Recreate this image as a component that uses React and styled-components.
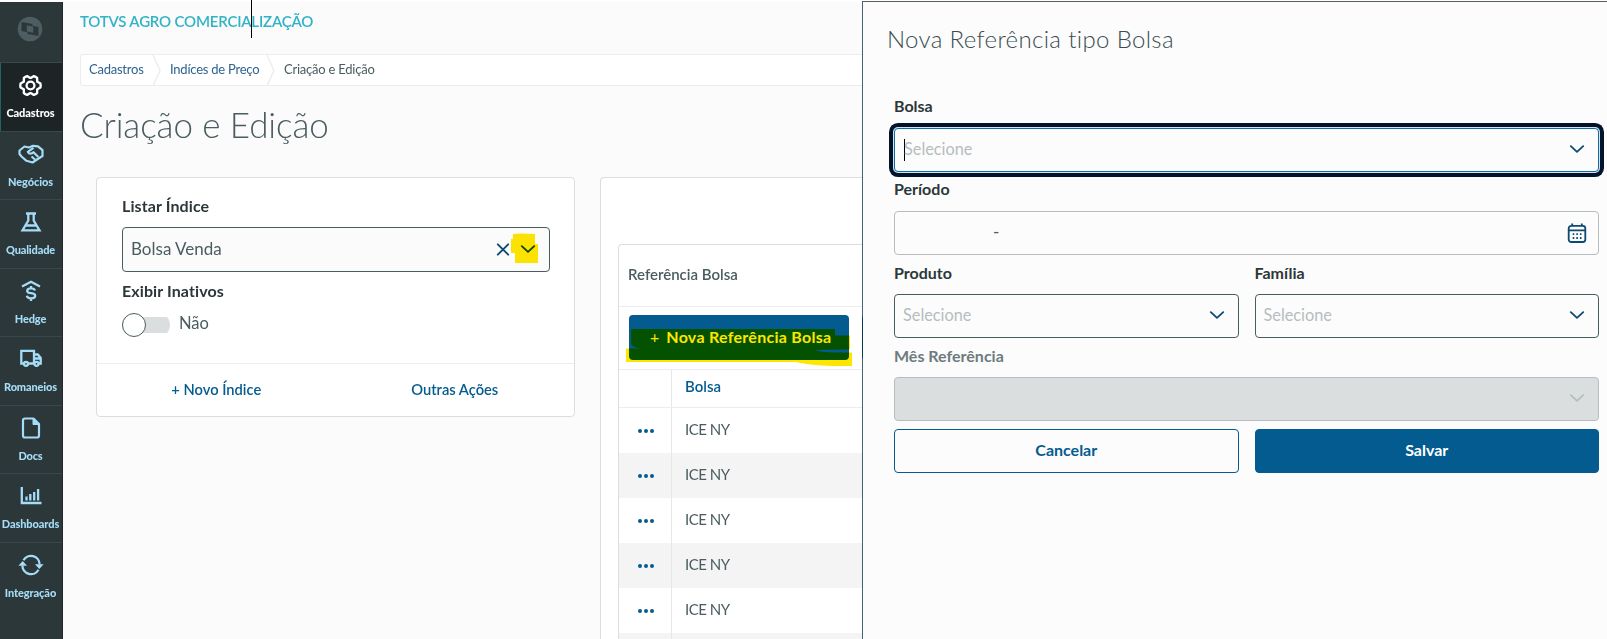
import React from 'react';
import styled, {createGlobalStyle} from "styled-components";
import {PiGearSixBold} from "react-icons/pi";

const primary = "#045b8f";
const textDark = "#2c3739";
const textMid = "#4a5c60";

const menuItems = [
    {label: "Cadastros", icon: <PiGearSixBold size={25}/>, active: true, track: -0.1},
    {label: "Negócios", icon: <HandshakeIcon/>, track: -0.1},
    {label: "Qualidade", icon: <FlaskIcon/>, track: -0.15},
    {label: "Hedge", icon: <HedgeIcon/>, track: -0.15},
    {label: "Romaneios", icon: <TruckIcon/>, track: -0.15},
    {label: "Docs", icon: <FileIcon/>, track: -0.2},
    {label: "Dashboards", icon: <ChartIcon/>, track: -0.1},
    {label: "Integração", icon: <SyncIcon/>, track: -0.1},
];

const rows = ["ICE NY", "ICE NY", "ICE NY", "ICE NY", "ICE NY"];

function LogoIcon() {
    return (
        <svg width="26" height="26" viewBox="0 0 26 26">
            <circle cx="13" cy="13" r="12.3" fill="#4d5d62"/>
            <path d="M4.5 6L15.5 8V9.8L21.5 11V20L10.5 18V16.2L4.5 15Z" fill="#2c3739"/>
            <path d="M9.8 9.3L16.2 10.4V16.7L9.8 15.6Z" fill="#4d5d62"/>
        </svg>
    );
}

function HandshakeIcon() {
    return (
        <svg width="26" height="24" viewBox="0 0 26 24" fill="none" stroke="currentColor" strokeWidth="2.2"
             strokeLinejoin="round">
            <path d="M1.5 8.5L6.5 4.5L11 5.5L15 3.8L20 4.3L24.5 8.2V14L20.5 16.5L14.5 20.5L8.5 18.8L3.5 14.5L1.5 12Z"/>
            <path d="M15.5 5.8L9.8 9.8C10.5 12.3 13.8 12 15.5 10.2L20.3 15M13.5 14.5L17 17.5"/>
        </svg>
    );
}

function FlaskIcon() {
    return (
        <svg width="24" height="24" viewBox="0 0 24 24" fill="none" stroke="currentColor" strokeWidth="2.3">
            <path d="M7 3.5H17M9.3 4V10.5L3.5 20.3H20.5L14.7 10.5V4M6.5 15.5H17.5"/>
        </svg>
    );
}

function HedgeIcon() {
    return (
        <svg width="24" height="24" viewBox="0 0 24 24" fill="none" stroke="currentColor" strokeWidth="2.3">
            <path d="M3 7.5L12 2.8L21 7.5"/>
            <path d="M16 11.5C15.5 9.8 13.8 9.3 12 9.3C9.8 9.3 8.2 10.2 8.2 11.9C8.2 15.4 16.2 13 16.2 16.7C16.2 18.4 14.3 19.3 12 19.3C9.6 19.3 8.2 18.4 7.8 16.7M12 7V9.5M12 19V22"/>
        </svg>
    );
}

function TruckIcon() {
    return (
        <svg width="24" height="24" viewBox="0 0 24 24" fill="none" stroke="currentColor" strokeWidth="2.3">
            <path d="M4.5 16.5H2.3V3.8H15V16.5H9.5M15 7.5H18.8L21.7 11V16.5H20M15 11.5H21"/>
            <circle cx="7" cy="16.8" r="2"/>
            <circle cx="17.5" cy="16.8" r="2"/>
        </svg>
    );
}

function FileIcon() {
    return (
        <svg width="24" height="24" viewBox="0 0 24 24" fill="none" stroke="currentColor" strokeWidth="2.2"
             strokeLinejoin="round">
            <path d="M6 2.5H14.5L20 8V19.5Q20 21.5 18 21.5H6Q4 21.5 4 19.5V4.5Q4 2.5 6 2.5Z"/>
            <path d="M14 3V8.5H19.5Z" fill="currentColor" strokeWidth="1"/>
        </svg>
    );
}

function ChartIcon() {
    return (
        <svg width="24" height="24" viewBox="0 0 24 24" fill="none" stroke="currentColor" strokeWidth="2.3">
            <path d="M2.8 3V19H22.5M7.5 16.5V12.5M11.3 16.5V10M15.2 16.5V8M19.1 16.5V5"/>
        </svg>
    );
}

function SyncIcon() {
    return (
        <svg width="26" height="24" viewBox="0 0 26 24" fill="none" stroke="currentColor" strokeWidth="2.3">
            <path d="M5.5 7.3A8.6 8.6 0 0 1 21.6 11.5M20.5 16.7A8.6 8.6 0 0 1 4.4 12.5"/>
            <path d="M17 11.3H25.6L21.3 16ZM0.4 12.7H9L4.7 8Z" fill="currentColor" stroke="none"/>
        </svg>
    );
}

function ChevronIcon({color = "#0c4a73"}) {
    return (
        <svg width="16" height="10" viewBox="0 0 16 10" fill="none" stroke={color} strokeWidth="1.8"
             strokeLinecap="round" strokeLinejoin="round">
            <path d="M1.8 1.2L8 6.9L14.2 1.2"/>
        </svg>
    );
}

function CloseIcon() {
    return (
        <svg width="14" height="14" viewBox="0 0 14 14" stroke="#0c4a73" strokeWidth="1.9" strokeLinecap="round">
            <path d="M1.8 1.3L12.2 11.7M12.2 1.3L1.8 11.7"/>
        </svg>
    );
}

function CalendarIcon() {
    return (
        <svg width="20" height="20" viewBox="0 0 20 20" fill="none" stroke="#0c4a73" strokeWidth="1.8">
            <rect x="1.7" y="2.8" width="16.6" height="16.2" rx="2.5"/>
            <path d="M2 7.3H18M5.2 0.5V3M14.8 0.5V3"/>
            <path d="M5.7 11.2H7.3M9.3 11.2H10.9M12.9 11.2H14.5M5.7 15H7.3M9.3 15H10.9M12.9 15H14.5"/>
        </svg>
    );
}

function Separator() {
    return (
        <svg width="9" height="31" viewBox="0 0 9 31" fill="none" stroke="#eceeee" strokeWidth="1.5">
            <path d="M1 0L8 15.5L1 31"/>
        </svg>
    );
}

const App = () => (
    <Screen>
        <GlobalStyle/>
        <Sidebar>
            <LogoBox><LogoIcon/></LogoBox>
            {menuItems.map((item) => (
                <MenuItem key={item.label} $active={item.active}>
                    <MenuIcon>{item.icon}</MenuIcon>
                    <MenuLabel $track={item.track}>{item.label}</MenuLabel>
                </MenuItem>
            ))}
        </Sidebar>
        <Main>
            <Product>TOTVS AGRO COMERCIALIZAÇÃO<Caret/></Product>
            <Breadcrumb>
                <Crumb $link $width={63}>Cadastros</Crumb>
                <Separator/>
                <Crumb $link $width={105}>Indíces de Preço</Crumb>
                <Separator/>
                <Crumb $width={110}>Criação e Edição</Crumb>
            </Breadcrumb>
            <PageTitle>Criação e Edição</PageTitle>
            <Columns>
                <FilterCard>
                    <FilterBody>
                        <Label>Listar Índice</Label>
                        <Field>
                            <Value>Bolsa Venda</Value>
                            <CloseIcon/>
                            <Marked>
                                <ChevronIcon/>
                                <ChevronMarker viewBox="0 0 28 31">
                                    <path d="M3 1L12 .5L25 1V11H28V30H5V20H1V6H3Z" fill="#ffe600"/>
                                </ChevronMarker>
                            </Marked>
                        </Field>
                        <Label $top={9}>Exibir Inativos</Label>
                        <SwitchRow>
                            <Switch><Knob/></Switch>
                            <span>Não</span>
                        </SwitchRow>
                    </FilterBody>
                    <FilterFooter>
                        <Action>+ Novo Índice</Action>
                        <Action>Outras Ações</Action>
                    </FilterFooter>
                </FilterCard>
                <TableCard>
                    <Table>
                        <TableTitle>Referência Bolsa</TableTitle>
                        <Toolbar>
                            <NewButton>
                                <span>+</span>
                                <b>Nova Referência Bolsa</b>
                                <ButtonMarker viewBox="0 0 228 40">
                                    <path
                                        d="M6 2H210V8.5H225V22.5L189 23Q197 25.5 213 25.5H227V39H207Q187 38.5 170 35H1V21.5H16Q7 20 6 17Z"
                                        fill="#ffe600"/>
                                </ButtonMarker>
                            </NewButton>
                            <NewButton/>
                        </Toolbar>
                        <HeadRow>
                            <MenuCell/>
                            <HeadCell>Bolsa</HeadCell>
                        </HeadRow>
                        {rows.map((name, index) => (
                            <Row key={index} $odd={index % 2 === 1}>
                                <MenuCell><Dot/><Dot/><Dot/></MenuCell>
                                <Cell>{name}</Cell>
                            </Row>
                        ))}
                        <Row $odd>
                            <MenuCell/>
                        </Row>
                    </Table>
                </TableCard>
            </Columns>
        </Main>
        <Panel>
            <PanelTitle>Nova Referência tipo Bolsa</PanelTitle>
            <Form>
                <Wide>
                    <PanelLabel>Bolsa</PanelLabel>
                    <FocusField>
                        <InputCaret/>
                        <Placeholder>Selecione</Placeholder>
                        <ChevronIcon/>
                    </FocusField>
                </Wide>
                <Wide>
                    <PanelLabel>Período</PanelLabel>
                    <DateField $border="#b6bdbf">
                        <Dash>-</Dash>
                        <CalendarIcon/>
                    </DateField>
                </Wide>
                <div>
                    <PanelLabel $top={1}>Produto</PanelLabel>
                    <PanelField>
                        <Placeholder>Selecione</Placeholder>
                        <ChevronIcon/>
                    </PanelField>
                </div>
                <div>
                    <PanelLabel $top={1}>Família</PanelLabel>
                    <PanelField>
                        <Placeholder>Selecione</Placeholder>
                        <ChevronIcon/>
                    </PanelField>
                </div>
                <Wide>
                    <PanelLabel $muted $top={1}>Mês Referência</PanelLabel>
                    <PanelField $border="#b6bdbf" $disabled>
                        <Placeholder/>
                        <ChevronIcon color="#b6bdbf"/>
                    </PanelField>
                </Wide>
                <Button>Cancelar</Button>
                <Button $primary>Salvar</Button>
            </Form>
        </Panel>
    </Screen>
);

const GlobalStyle = createGlobalStyle`
  * {
    box-sizing: border-box;
  }
  body {
    margin: 0;
    overflow: hidden;
    background: #ffffff;
    font-family: Lato, "Open Sans", sans-serif;
  }
  svg {
    flex: none;
    display: block;
  }
`;

const Screen = styled.div`
  display: flex;
  width: 1607px;
  height: 639px;
  overflow: hidden;
`;

const Sidebar = styled.nav`
  width: 63px;
  flex: none;
  margin-top: 2px;
  background: #2c3739;
  border-right: 1px solid #1f292b;
`;
const LogoBox = styled.div`
  height: 60px;
  padding: 14px 0 0 17px;
`;
const MenuItem = styled.div`
  height: 68.5px;
  display: flex;
  flex-direction: column;
  align-items: center;
  padding: 9px 1px 0 0;
  border-top: 1px solid #3b484b;
  box-shadow: ${props => props.$active ? "inset 1px 0 #1d6468" : "none"};
  background: ${props => props.$active ? "#1d2426" : "transparent"};
  color: ${props => props.$active ? "#ffffff" : "#a5dcf7"};
`;
const MenuIcon = styled.div`
  height: 26px;
  display: flex;
  align-items: center;
`;
const MenuLabel = styled.div`
  margin-top: 8px;
  font-size: 11px;
  line-height: 14px;
  font-weight: 900;
  white-space: nowrap;
  letter-spacing: ${props => props.$track}px;
`;

const Main = styled.main`
  width: 800px;
  flex: none;
  margin-top: 2px;
  height: 637px;
  padding-left: 17px;
  background: #fbfbfb;
`;
const Product = styled.div`
  position: relative;
  height: 52px;
  padding-top: 9px;
  font-size: 15px;
  line-height: 20px;
  font-weight: 600;
  letter-spacing: -0.2px;
  color: #2fb3c6;
`;
const Caret = styled.i`
  position: absolute;
  left: 171px;
  top: -2px;
  width: 1px;
  height: 38px;
  background: #000000;
`;
const Breadcrumb = styled.div`
  display: flex;
  align-items: center;
  height: 32px;
  border: 1px solid #eceeee;
  border-right: none;
  border-radius: 3px 0 0 3px;
  background: #ffffff;
  padding-left: 8px;
`;
const Crumb = styled.span`
  width: ${props => props.$width}px;
  font-size: 13px;
  line-height: 16px;
  padding-bottom: 2px;
  white-space: nowrap;
  letter-spacing: -0.23px;
  color: ${props => props.$link ? "#2f6390" : textMid};
  ${Breadcrumb} svg + & {
    padding-left: 9px;
  }
`;
const PageTitle = styled.h1`
  margin: 15px 0 0;
  height: 76px;
  font-size: 35px;
  line-height: 46px;
  font-weight: 300;
  letter-spacing: -0.1px;
  color: ${textMid};
`;
const Columns = styled.div`
  display: flex;
  align-items: flex-start;
  gap: 25px;
  padding-left: 16px;
`;
const FilterCard = styled.section`
  width: 479px;
  height: 240px;
  flex: none;
  border: 1px solid #dadedf;
  border-radius: 4px;
  background: #ffffff;
`;
const FilterBody = styled.div`
  height: 186px;
  padding: 18px 24px 0 25px;
  border-bottom: 1px solid #eceeee;
`;
const Label = styled.div`
  margin-top: ${props => props.$top || 0}px;
  padding-bottom: 11px;
  font-size: 16px;
  line-height: 20px;
  font-weight: 700;
  letter-spacing: 0.1px;
  color: ${textDark};
`;
const Field = styled.div`
  display: flex;
  align-items: center;
  height: 45px;
  padding: 0 13px 0 8px;
  border: 1px solid ${textMid};
  border-radius: 4px;
  background: #fbfbfb;
`;
const Value = styled.span`
  flex: 1;
  padding-bottom: 2px;
  font-size: 17px;
  line-height: 22px;
  color: ${textMid};
`;
const Marked = styled.span`
  position: relative;
  margin-left: 10px;
`;
const ChevronMarker = styled.svg`
  position: absolute;
  left: -10px;
  top: -12px;
  width: 28px;
  height: 31px;
  mix-blend-mode: multiply;
`;
const SwitchRow = styled.div`
  display: flex;
  align-items: center;
  gap: 9px;
  font-size: 16.5px;
  line-height: 22px;
  color: ${textMid};
  span {
    padding-bottom: 3px;
  }
`;
const Switch = styled.div`
  width: 48px;
  height: 24px;
  border-radius: 12px;
  background: linear-gradient(#dadedf, #dadedf) center / 100% 16px no-repeat;
`;
const Knob = styled.div`
  width: 24px;
  height: 24px;
  border: 1px solid ${textMid};
  border-radius: 50%;
  background: #ffffff;
`;
const FilterFooter = styled.div`
  display: flex;
`;
const Action = styled.div`
  flex: 1;
  padding-top: 15px;
  text-align: center;
  font-size: 14.7px;
  line-height: 20px;
  font-weight: 600;
  color: ${primary};
`;

const TableCard = styled.section`
  flex: 1;
  height: 480px;
  padding: 66px 0 0 17px;
  border: 1px solid #dadedf;
  border-right: none;
  border-radius: 4px 0 0 0;
  background: #ffffff;
`;
const Table = styled.div`
  border: 1px solid #dadedf;
  border-right: none;
  border-radius: 4px 0 0 0;
`;
const TableTitle = styled.div`
  height: 62px;
  padding: 19px 0 0 9px;
  border-bottom: 1px solid #eceeee;
  font-size: 15px;
  line-height: 20px;
  font-weight: 600;
  color: ${textMid};
`;
const Toolbar = styled.div`
  display: flex;
  gap: 13px;
  height: 63px;
  padding: 8px 0 0 10px;
  overflow: hidden;
  border-bottom: 1px solid #eceeee;
`;
const NewButton = styled.div`
  position: relative;
  display: flex;
  align-items: center;
  gap: 7px;
  flex: none;
  width: 220px;
  height: 45px;
  padding: 0 0 1px 21px;
  border-radius: 4px;
  background: ${primary};
  color: #ffffff;
  font-size: 16px;
  line-height: 20px;
  white-space: nowrap;
  b {
    letter-spacing: 0.28px;
  }
`;
const ButtonMarker = styled.svg`
  position: absolute;
  left: -4px;
  top: 12px;
  width: 228px;
  height: 40px;
  mix-blend-mode: multiply;
`;
const HeadRow = styled.div`
  display: flex;
  height: 38px;
  border-bottom: 1px solid #eceeee;
`;
const Row = styled.div`
  display: flex;
  height: 45px;
  background: ${props => props.$odd ? "#f4f4f4" : "#ffffff"};
`;
const MenuCell = styled.div`
  display: flex;
  align-items: center;
  justify-content: center;
  gap: 2px;
  width: 53px;
  padding-left: 2px;
  border-right: 1px solid #e6e8e8;
`;
const Dot = styled.i`
  width: 4px;
  height: 4px;
  border-radius: 50%;
  background: ${primary};
`;
const Cell = styled.div`
  padding: 11px 0 0 13px;
  font-size: 15px;
  line-height: 20px;
  letter-spacing: -0.5px;
  color: ${textMid};
`;
const HeadCell = styled(Cell)`
  padding-top: 6px;
  font-weight: 600;
  letter-spacing: 0;
  color: ${primary};
`;

const Panel = styled.aside`
  position: relative;
  flex: none;
  width: 745px;
  height: 638px;
  margin: 1px 0 0 -1px;
  border-left: 1px solid rgba(8, 48, 68, 0.75);
  border-top: 1px solid #55605f;
  background: #fcfcfc;
  background-clip: padding-box;
`;
const PanelTitle = styled.h2`
  margin: 0;
  height: 94px;
  padding: 22px 0 0 24px;
  font-size: 24px;
  line-height: 30px;
  font-weight: 300;
  letter-spacing: 0.35px;
  color: #3a4c50;
`;
const Form = styled.div`
  display: grid;
  grid-template-columns: 1fr 1fr;
  column-gap: 16px;
  padding: 0 8px 0 31px;
`;
const Wide = styled.div`
  grid-column: span 2;
`;
const PanelLabel = styled.div`
  height: 32px;
  padding-top: ${props => props.$top || 0}px;
  font-size: 16px;
  line-height: 20px;
  font-weight: 700;
  color: ${props => props.$muted ? "#6e7b7e" : textDark};
`;
const PanelField = styled(Field)`
  height: 44px;
  margin-bottom: 7px;
  border-color: ${props => props.$border || textMid};
  background: ${props => props.$disabled ? "#dadedf" : "#fcfcfc"};
`;
const FocusField = styled(PanelField)`
  padding-bottom: 1px;
  border-color: #0c6ca5;
  box-shadow: 0 0 0 1px #d8e2ea, 0 0 0 5px #02142b;
`;
const DateField = styled(PanelField)`
  padding-right: 11px;
`;
const InputCaret = styled.i`
  width: 1px;
  height: 22px;
  margin: 0 -1px 0 1px;
  background: #000000;
`;
const Placeholder = styled.span`
  flex: 1;
  padding-bottom: 2px;
  font-size: 16.3px;
  line-height: 22px;
  color: #b6bdbf;
`;
const Dash = styled.span`
  flex: 1;
  padding: 0 0 3px 90px;
  font-size: 17px;
  color: ${textMid};
`;
const Button = styled.div`
  display: flex;
  align-items: center;
  justify-content: center;
  height: 44px;
  margin-top: 1px;
  padding-bottom: 3px;
  border: 1px solid ${primary};
  border-radius: 4px;
  font-size: 16px;
  font-weight: 700;
  color: ${props => props.$primary ? "#ffffff" : primary};
  background: ${props => props.$primary ? primary : "#fcfcfc"};
`;

export default App;
